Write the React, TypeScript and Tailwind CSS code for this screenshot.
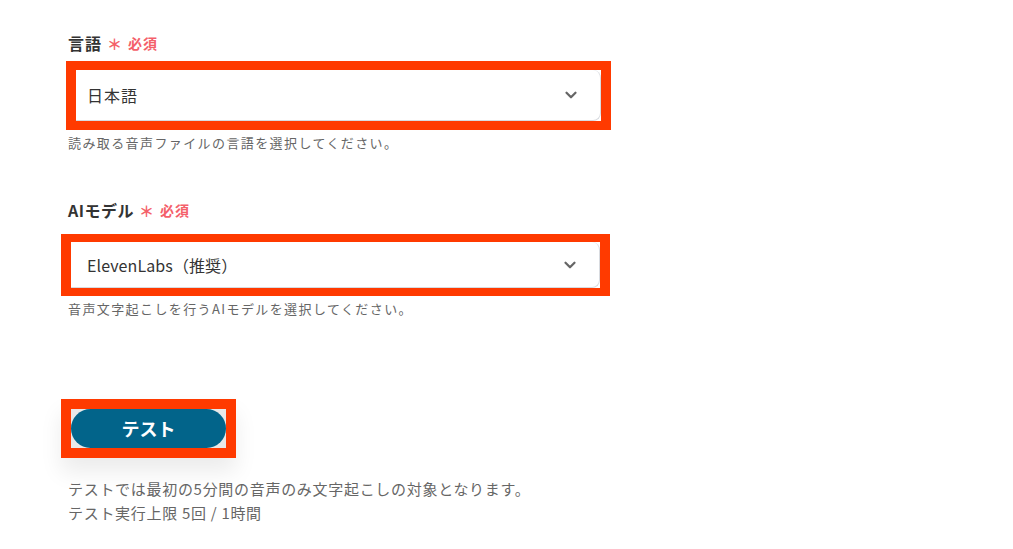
import { ChevronDown } from "lucide-react";

function Required() {
    return (
        <span className="ml-[5px] flex items-center text-[14px] font-bold tracking-[1px] text-[#f4606a]">
            <span className="mr-[5px] text-[15px] leading-none">＊</span>必須
        </span>
    )
}

function SelectBox({ value, boxClass, padClass }: { value: string; boxClass: string; padClass: string }) {
    return (
        <div className={`border-[#ff3a00] bg-white ${boxClass}`}>
            <div className={`flex h-full items-center justify-between rounded-r-lg border-r border-b border-[#d8dbe0] bg-white pr-5 ${padClass}`}>
                <span className="text-[16px] text-[#333]">{value}</span>
                <ChevronDown className="h-[18px] w-[18px] text-[#666]" strokeWidth={3} />
            </div>
        </div>
    )
}

export default function App() {
    return (
        <div className="min-h-[549px] w-[1013px] bg-white pt-[31px] font-['Noto_Sans_CJK_JP',sans-serif] text-[#333]">
            <div className="flex items-center pl-[68px]">
                <span className="text-[16px] font-bold leading-6 tracking-[1px]">言語</span>
                <Required />
            </div>
            <SelectBox value="日本語" padClass="pl-[11px] tracking-[1px]" boxClass="mt-[6px] ml-[66px] h-[69px] w-[545px] border-x-[10px] border-y-[9px]" />
            <p className="mt-[4px] pl-[68px] text-[13px] leading-[18px] tracking-[1.4px] text-[#666]">読み取る音声ファイルの言語を選択してください。</p>

            <div className="mt-[46px] flex items-center pl-[68px]">
                <span className="text-[16px] font-bold leading-6 tracking-[0.5px]">AIモデル</span>
                <Required />
            </div>
            <SelectBox value="ElevenLabs（推奨）" padClass="pl-[16px] tracking-[0.1px]" boxClass="mt-[12px] ml-[61px] h-[62px] w-[549px] border-x-[10px] border-y-[8px]" />
            <p className="mt-[4px] pl-[68px] text-[13px] leading-[18px] tracking-[1.4px] text-[#666]">音声文字起こしを行うAIモデルを選択してください。</p>

            <div className="ml-[61px] mt-[81px] h-[59px] w-[175px] border-[10px] border-[#ff3a00] bg-[#e8e8e8] shadow-[0_14px_22px_rgba(0,0,0,0.08)]">
                <button className="flex h-full w-full items-center justify-center rounded-full bg-[#02648a] text-[18px] font-bold text-white">
                    テスト
                </button>
            </div>

            <div className="mt-[19px] pl-[68px] text-[15px] leading-6 tracking-[0.7px] text-[#666]">
                <p>テストでは最初の5分間の音声のみ文字起こしの対象となります。</p>
                <p>テスト実行上限 5回 / 1時間</p>
            </div>
        </div>
    )
}
